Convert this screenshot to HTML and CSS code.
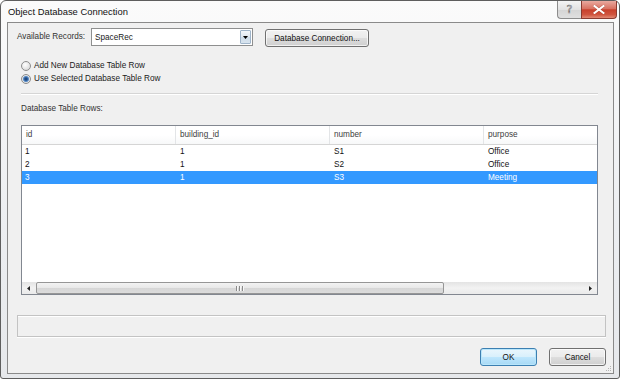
FILE: index.html
```html
<!DOCTYPE html>
<html>
<head>
<meta charset="utf-8">
<link rel="stylesheet" href="styles.css">
</head>
<body>
<div class="window">
  <div class="titlebar">
    <span class="title">Object Database Connection</span>
    <div class="caption-btns">
      <div class="cap help"><span class="q">?</span></div>
      <div class="cap close">
        <svg width="12" height="9" viewBox="0 0 12 9"><path d="M1.5 1 L10.5 8 M10.5 1 L1.5 8" stroke="#7a2a20" stroke-width="3" stroke-linecap="square" fill="none" opacity="0.35"/><path d="M1.5 1 L10.5 8 M10.5 1 L1.5 8" stroke="#fff" stroke-width="2" stroke-linecap="square" fill="none"/></svg>
      </div>
    </div>
  </div>
  <div class="client">
    <div class="row-records">
      <span class="lbl-records">Available Records:</span>
      <div class="combo">
        <span class="combo-text">SpaceRec</span>
        <span class="combo-btn"><svg width="5" height="3" viewBox="0 0 5 3"><path d="M0 0 H5 L2.5 3 Z" fill="#000"/></svg></span>
      </div>
      <div class="btn btn-conn">Database Connection...</div>
    </div>
    <div class="radios">
      <div class="radio-line"><span class="radio"></span><span>Add New Database Table Row</span></div>
      <div class="radio-line"><span class="radio checked"></span><span>Use Selected Database Table Row</span></div>
    </div>
    <div class="separator"></div>
    <div class="lbl-rows">Database Table Rows:</div>
    <div class="listview">
      <div class="lv-header">
        <div class="lv-col">id</div>
        <div class="lv-col">building_id</div>
        <div class="lv-col">number</div>
        <div class="lv-col">purpose</div>
      </div>
      <div class="lv-body">
        <div class="lv-row"><div class="lv-cell">1</div><div class="lv-cell">1</div><div class="lv-cell">S1</div><div class="lv-cell">Office</div></div>
        <div class="lv-row"><div class="lv-cell">2</div><div class="lv-cell">1</div><div class="lv-cell">S2</div><div class="lv-cell">Office</div></div>
        <div class="lv-row selected"><div class="lv-cell">3</div><div class="lv-cell">1</div><div class="lv-cell">S3</div><div class="lv-cell">Meeting</div></div>
      </div>
      <div class="hscroll">
        <div class="sb-arrow"><svg width="3" height="5" viewBox="0 0 3 5"><path d="M3 0 V5 L0 2.5 Z" fill="#222"/></svg></div>
        <div class="sb-track">
          <div class="sb-thumb"><span class="grip"></span><span class="grip"></span><span class="grip"></span></div>
        </div>
        <div class="sb-arrow"><svg width="3" height="5" viewBox="0 0 3 5"><path d="M0 0 V5 L3 2.5 Z" fill="#222"/></svg></div>
      </div>
    </div>
    <div class="status-box"></div>
    <div class="actions">
      <div class="btn btn-ok">OK</div>
      <div class="btn btn-cancel">Cancel</div>
    </div>
    <div class="sizegrip">
      <svg width="7" height="7" viewBox="0 0 7 7" fill="#b5b5b5"><rect x="5" y="1" width="1" height="1"/><rect x="3" y="3" width="1" height="1"/><rect x="5" y="3" width="1" height="1"/><rect x="1" y="5" width="1" height="1"/><rect x="3" y="5" width="1" height="1"/><rect x="5" y="5" width="1" height="1"/></svg>
    </div>
  </div>
</div>
</body>
</html>
```

FILE: styles.css
```css
html, body {
  margin: 0;
  padding: 0;
  background: #ffffff;
}
body {
  font-family: "Liberation Sans", Arial, sans-serif;
  font-size: 8.2px;
  color: #1b1b1b;
}
.window {
  box-sizing: border-box;
  width: 620px;
  height: 379px;
  border: 1px solid #5e5e5e;
  border-radius: 6px 6px 3px 3px;
  background: linear-gradient(#fbfbfb, #eceef1 60%, #e6e8eb);
  padding: 0 5px 4px 6px;
  display: flex;
  flex-direction: column;
}
.titlebar {
  height: 21px;
  display: flex;
  align-items: flex-start;
}
.title {
  font-size: 9.4px;
  color: #111;
  margin-left: 1px;
  line-height: 22px;
}
.caption-btns {
  margin-left: auto;
  margin-right: -3px;
  display: flex;
}
.cap {
  height: 18px;
  box-sizing: border-box;
  border: 1px solid #8c8c8c;
  border-top: none;
  display: flex;
  align-items: center;
  justify-content: center;
}
.help {
  width: 24px;
  border-radius: 0 0 0 4px;
  background: linear-gradient(#f4f4f4, #e2e2e2 50%, #d4d4d4 51%, #e0e0e0);
  border-right: none;
}
.q {
  font-size: 11px;
  color: #f4f4f4;
  font-family: "DejaVu Sans", sans-serif;
  -webkit-text-stroke: 0.6px #777;
}
.close {
  width: 36px;
  border-color: #8a3a30;
  border-radius: 0 0 4px 0;
  background: linear-gradient(#e9a99f, #d87262 45%, #c8402c 52%, #d0553f 80%, #e28a75);
}
.client {
  flex: 1;
  position: relative;
  border: 1px solid #8a8a8a;
  background: #f0f0f0;
  padding: 5px 7px 0 9px;
  display: flex;
  flex-direction: column;
}
.row-records {
  display: flex;
  align-items: flex-start;
  height: 19px;
}
.lbl-records {
  width: 74px;
  line-height: 18px;
  color: #333;
}
.combo {
  box-sizing: border-box;
  width: 162px;
  height: 18px;
  border: 1px solid #8e8f8f;
  background: #fff;
  display: flex;
  align-items: center;
}
.combo-text {
  flex: 1;
  padding-left: 3px;
  color: #222;
}
.combo-btn {
  box-sizing: border-box;
  width: 11px;
  height: 14px;
  margin-right: 1px;
  border: 1px solid #9fb4c9;
  border-radius: 1px;
  background: linear-gradient(#f2f6fa, #dfe8f1 50%, #cddbe8 51%, #d8e4ef);
  display: flex;
  align-items: center;
  justify-content: center;
}
.btn {
  box-sizing: border-box;
  height: 18px;
  border: 1px solid #707070;
  border-radius: 3px;
  background: linear-gradient(#f2f2f2, #ebebeb 48%, #dddddd 52%, #cfcfcf);
  box-shadow: inset 0 0 0 1px rgba(255,255,255,0.7);
  display: flex;
  align-items: center;
  justify-content: center;
  color: #111;
}
.btn-conn {
  width: 104px;
  margin-left: 12px;
  margin-top: 1px;
}
.radios {
  margin-top: 12px;
  padding-left: 4px;
}
.radio-line {
  height: 13px;
  display: flex;
  align-items: center;
}
.radio {
  box-sizing: border-box;
  width: 10px;
  height: 10px;
  border-radius: 50%;
  border: 1px solid #8d8d8d;
  background: radial-gradient(circle at 40% 35%, #ffffff, #dcdcdc 75%, #cfcfcf);
  margin-right: 3px;
  flex: none;
}
.radio.checked {
  background: radial-gradient(circle at 50% 50%, #16386a 0, #2d5d9a 1.5px, #6b9ad0 2.8px, #e6e6e6 3.3px, #d0d0d0 100%);
}
.separator {
  margin: 8px 8px 0 4px;
  height: 1px;
  background: #d5d5d5;
  border-bottom: 1px solid #ffffff;
}
.lbl-rows {
  margin-top: 8px;
  padding-left: 4px;
  line-height: 11px;
  color: #333;
}
.listview {
  box-sizing: border-box;
  margin: 11px 8px 0 4px;
  height: 170px;
  border: 1px solid #828790;
  background: #fff;
  display: flex;
  flex-direction: column;
  overflow: hidden;
}
.lv-header {
  height: 18px;
  flex: none;
  border-bottom: 1px solid #d5d5d5;
  display: flex;
  background: linear-gradient(#ffffff, #ffffff 50%, #f7f8f9);
}
.lv-col {
  box-sizing: border-box;
  width: 154px;
  flex: none;
  padding-left: 4px;
  line-height: 18px;
  border-right: 1px solid #e3e5e7;
  color: #3d3d3d;
}
.lv-body {
  flex: 1;
}
.lv-row {
  height: 13px;
  display: flex;
}
.lv-cell {
  box-sizing: border-box;
  width: 154px;
  flex: none;
  padding-left: 4px;
  line-height: 13px;
  color: #111;
}
.lv-row.selected {
  background: #3399ff;
}
.lv-row.selected .lv-cell {
  color: #ffffff;
}
.lv-row .lv-cell:first-child {
  padding-left: 3px;
}
.hscroll {
  height: 12px;
  flex: none;
  display: flex;
  background: linear-gradient(#e3e3e3, #f2f2f2 50%, #eaeaea);
  border-top: 1px solid #ffffff;
}
.sb-arrow {
  width: 13px;
  display: flex;
  align-items: center;
  justify-content: center;
}
.sb-track {
  flex: 1;
  display: flex;
  padding: 0 1px;
}
.sb-thumb {
  box-sizing: border-box;
  width: 408px;
  height: 12px;
  border: 1px solid #969696;
  border-radius: 2px;
  background: linear-gradient(#f3f3f3, #e8e8e8 50%, #d6d6d6 51%, #dcdcdc);
  display: flex;
  align-items: center;
  justify-content: center;
  gap: 1px;
}
.grip {
  width: 1px;
  height: 5px;
  background: #8a8a8a;
  box-shadow: 1px 0 0 #f8f8f8;
  margin-right: 1px;
}
.status-box {
  box-sizing: border-box;
  margin-top: 20px;
  height: 22px;
  border: 1px solid #c3c3c3;
  box-shadow: 0 1px 0 #ffffff, inset 0 1px 0 #ffffff;
}
.actions {
  margin-top: 11px;
  display: flex;
  justify-content: flex-end;
  gap: 12px;
}
.btn-ok, .btn-cancel {
  width: 57px;
}
.btn-ok {
  border-color: #3c7fb1;
  box-shadow: inset 0 0 0 1px #b9e6fb;
  background: linear-gradient(#eaf6fd, #d9f0fc 48%, #bee6fd 52%, #a7d9f5);
}
.sizegrip {
  position: absolute;
  right: 1px;
  bottom: 1px;
  width: 7px;
  height: 7px;
}
.sizegrip svg {
  display: block;
}
```
